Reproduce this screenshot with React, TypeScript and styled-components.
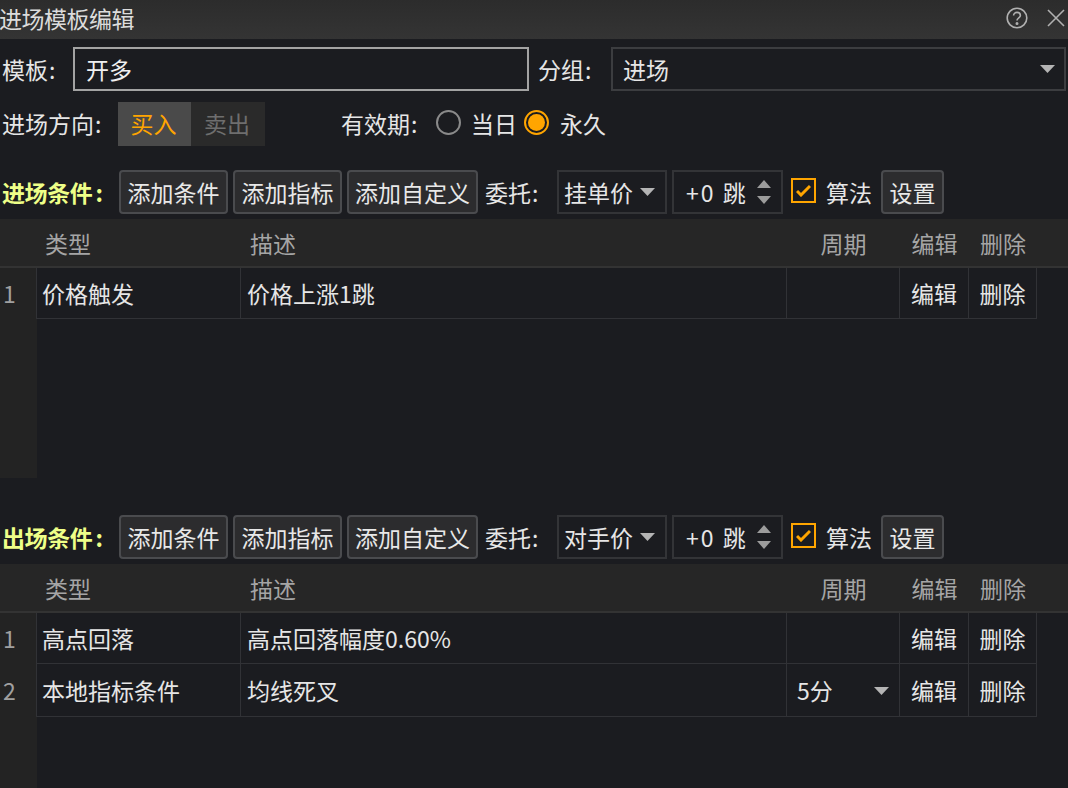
import React from "react";
import styled, { createGlobalStyle } from "styled-components";

const Global = createGlobalStyle`
  html, body { margin: 0; padding: 0; background: #1b1c20; }
  body { font-family: "Noto Sans CJK SC", "Noto Sans", sans-serif; color: #e6e6e6; font-size: 23px; overflow: hidden; }
  * { box-sizing: border-box; }
`;

const Page = styled.div`width: 1068px; height: 788px; overflow: hidden; background: #1b1c20;`;
const TitleBar = styled.div`
  height: 39px; background: linear-gradient(#2c2c2c, #343434); display: flex; align-items: center;
  justify-content: space-between; color: #dcdcdc; line-height: 36px; padding-right: 3px;
`;
const TitleText = styled.span`margin-left: -1px; letter-spacing: -0.5px; height: 39px;`;
const TitleIcons = styled.div`display: flex; align-items: center; gap: 19px; margin-top: -3px;`;
const FormRow = styled.div<{ $top: number }>`
  display: flex; align-items: center; height: 44px; margin-top: ${p => p.$top}px; padding-left: 2px;
`;
const Label = styled.span<{ $w: number; $pad?: number; $lh?: number }>`
  width: ${p => p.$w}px; flex: none; white-space: nowrap; line-height: ${p => p.$lh ?? 43}px; height: 44px;
  padding-left: ${p => p.$pad ?? 0}px;
`;
const Colon = styled.span<{ $gap?: number }>`margin-left: ${p => p.$gap ?? 1}px;`;
const TextBox = styled.div`
  width: 456px; height: 44px; border: 2px solid #a3a3a3; padding-left: 11px; line-height: 41px; color: #f0f0f0; flex: none;
`;
const Select = styled.div`
  width: 455px; height: 44px; border: 2px solid #3c3d40; padding: 0 9px 0 10px; display: flex; line-height: 41px;
  align-items: center; justify-content: space-between; flex: none;
`;
const Toggle = styled.div`display: flex; height: 44px; flex: none; margin-right: 76px;`;
const ToggleItem = styled.div<{ $on?: boolean }>`
  width: ${p => (p.$on ? 73 : 74)}px; line-height: 43px; text-align: center; padding-right: 2px;
  background: ${p => (p.$on ? "#4a4a4a" : "#2a2a2a")}; color: ${p => (p.$on ? "#ffa500" : "#6e6e6e")};
`;
const Radio = styled.span<{ $on?: boolean }>`
  width: 25px; height: 25px; border-radius: 50%; flex: none; position: relative; margin-top: -4px;
  border: 2px solid ${p => (p.$on ? "#ffa500" : "#8a8a8a")}; margin-right: ${p => (p.$on ? 11 : 10)}px;
  ${p => p.$on && `&::after { content: ""; position: absolute; inset: 2px; border-radius: 50%; background: #ffa500; }`}
`;
const RadioText = styled.span`margin-right: 7px; line-height: 43px; height: 44px;`;
const Toolbar = styled.div<{ $top: number }>`
  display: flex; align-items: center; height: 44px; margin-top: ${p => p.$top}px; padding-left: 2px;
`;
const SectionTitle = styled.span`
  width: 117px; flex: none; color: #eeff88; font-weight: 700; font-size: 23px; white-space: nowrap; letter-spacing: -0.4px;
`;
const Btn = styled.div<{ $w: number }>`
  width: ${p => p.$w}px; height: 44px; flex: none; border: 2px solid #4a4b4e; border-radius: 4px; background: #2c2c2e;
  display: flex; align-items: center; justify-content: center; margin-right: 5px; white-space: nowrap; color: #e8e8e8;
`;
const Plain = styled.span<{ $w: number }>`width: ${p => p.$w}px; flex: none; white-space: nowrap; margin-left: 2px;`;
const Combo = styled.div`
  width: 110px; height: 44px; flex: none; border: 2px solid #333437; padding: 0 10px 0 5px; display: flex; align-items: center;
  justify-content: space-between; margin-right: 5px;
`;
const Spin = styled.div`
  width: 111px; height: 44px; flex: none; border: 2px solid #333437; padding: 0 10px 0 12px; display: flex; align-items: center;
  justify-content: space-between; margin-right: 8px; letter-spacing: 2px;
`;
const SpinArrows = styled.div`display: flex; flex-direction: column; gap: 8px;`;
const Check = styled.span`
  width: 25px; height: 25px; flex: none; border: 2px solid #ffa500; display: flex; align-items: center; justify-content: center;
  margin-right: 10px; margin-top: -3px;
`;
const AlgoText = styled.span`width: 55px; flex: none;`;
const Table = styled.div<{ $h: number }>`height: ${p => p.$h}px; margin-top: 5px; display: flex; flex-direction: column;`;
const HeaderRow = styled.div`
  display: grid; grid-template-columns: 37px 204px 546px 113px 69px 68px 31px; height: 49px; background: #262626;
  border-bottom: 2px solid #333333; flex: none; color: #a5a5a5; line-height: 48px;
`;
const HeadCell = styled.span<{ $pad?: number; $center?: boolean }>`
  padding-left: ${p => p.$pad ?? 0}px; ${p => p.$center && "text-align: center;"}
`;
const Body = styled.div`
  flex: 1; display: flex; flex-direction: column; min-height: 0;
  background: linear-gradient(90deg, #232323 37px, #1b1c20 37px);
`;
const Row = styled.div<{ $h: number }>`
  display: grid; grid-template-columns: 37px 204px 546px 113px 69px 68px; width: 1037px; height: ${p => p.$h}px;
  border-bottom: 1px solid #313236; line-height: ${p => p.$h}px; flex: none;
`;
const Idx = styled.span`background: #232323; color: #a0a0a0; padding-left: 3px; border-right: 1px solid #313236;`;
const Cell = styled.span<{ $center?: boolean; $pad?: number }>`
  padding-left: ${p => p.$pad ?? 5}px; border-right: 1px solid #313236; white-space: nowrap; overflow: hidden;
  ${p => p.$center && "padding-left: 0; text-align: center;"}
`;
const PeriodCell = styled.span`
  display: flex; align-items: center; justify-content: space-between; padding: 0 10px 0 10px; border-right: 1px solid #313236;
`;

const Caret = () => (
  <svg width="15" height="8" viewBox="0 0 15 8"><path d="M0 0H15L7.5 8Z" fill="#b4b4b4" /></svg>
);
const Up = () => (
  <svg width="14" height="8" viewBox="0 0 14 8" display="block"><path d="M7 0L14 8H0Z" fill="#9c9c9c" /></svg>
);
const Down = () => (
  <svg width="14" height="8" viewBox="0 0 14 8" display="block"><path d="M0 0H14L7 8Z" fill="#9c9c9c" /></svg>
);
const Tick = () => (
  <svg width="15" height="13" viewBox="0 0 15 13"><path d="M1 7L5 11L14 2" fill="none" stroke="#ffa500" strokeWidth="3" /></svg>
);
const Help = () => (
  <svg width="22" height="22" viewBox="0 0 22 22" fill="none" stroke="#b0b0b0" strokeWidth="1.6">
    <circle cx="11" cy="11" r="9.8" />
    <path d="M7.6 8.6C7.6 6.6 9.2 5.4 11 5.4C12.9 5.4 14.4 6.6 14.4 8.4C14.4 10.8 11 11 11 13.6" />
    <circle cx="11" cy="16.4" r="0.7" fill="#b0b0b0" />
  </svg>
);
const Close = () => (
  <svg width="18" height="18" viewBox="0 0 18 18" fill="none" stroke="#b0b0b0" strokeWidth="1.6"><path d="M1 1L17 17M17 1L1 17" /></svg>
);

type RowData = { type: string; desc: string; period?: string };

const Section = ({ title, price, rows, top, h }: { title: string; price: string; rows: RowData[]; top: number; h: number }) => (
  <>
    <Toolbar $top={top}>
      <SectionTitle>{title}<Colon $gap={3}>:</Colon></SectionTitle>
      <Btn $w={109}>添加条件</Btn>
      <Btn $w={109}>添加指标</Btn>
      <Btn $w={131}>添加自定义</Btn>
      <Plain $w={72}>委托<Colon>:</Colon></Plain>
      <Combo>{price}<Caret /></Combo>
      <Spin>+0 跳<SpinArrows><Up /><Down /></SpinArrows></Spin>
      <Check><Tick /></Check>
      <AlgoText>算法</AlgoText>
      <Btn $w={63}>设置</Btn>
    </Toolbar>
    <Table $h={h}>
      <HeaderRow>
        <span />
        <HeadCell $pad={8}>类型</HeadCell>
        <HeadCell $pad={9}>描述</HeadCell>
        <HeadCell $center>周期</HeadCell>
        <HeadCell $center>编辑</HeadCell>
        <HeadCell $center>删除</HeadCell>
      </HeaderRow>
      <Body>
        {rows.map((r, i) => (
          <Row key={i} $h={i === 0 ? 51 : 53}>
            <Idx>{i + 1}</Idx>
            <Cell>{r.type}</Cell>
            <Cell $pad={6}>{r.desc}</Cell>
            {r.period ? <PeriodCell>{r.period}<Caret /></PeriodCell> : <Cell />}
            <Cell $center>编辑</Cell>
            <Cell $center>删除</Cell>
          </Row>
        ))}
      </Body>
    </Table>
  </>
);

export default function App() {
  return (
    <Page>
      <Global />
      <TitleBar>
        <TitleText>进场模板编辑</TitleText>
        <TitleIcons><Help /><Close /></TitleIcons>
      </TitleBar>
      <FormRow $top={8}>
        <Label $w={71} $lh={45}>模板<Colon>:</Colon></Label>
        <TextBox>开多</TextBox>
        <Label $w={82} $pad={9} $lh={45}>分组<Colon>:</Colon></Label>
        <Select>进场<Caret /></Select>
      </FormRow>
      <FormRow $top={11}>
        <Label $w={116}>进场方向<Colon>:</Colon></Label>
        <Toggle>
          <ToggleItem $on>买入</ToggleItem>
          <ToggleItem>卖出</ToggleItem>
        </Toggle>
        <Label $w={95}>有效期<Colon>:</Colon></Label>
        <Radio />
        <RadioText>当日</RadioText>
        <Radio $on />
        <RadioText>永久</RadioText>
      </FormRow>
      <Section top={24} h={259} title="进场条件" price="挂单价" rows={[{ type: "价格触发", desc: "价格上涨1跳" }]} />
      <Section top={37} h={224} title="出场条件" price="对手价" rows={[
        { type: "高点回落", desc: "高点回落幅度0.60%" },
        { type: "本地指标条件", desc: "均线死叉", period: "5分" },
      ]} />
    </Page>
  );
}
